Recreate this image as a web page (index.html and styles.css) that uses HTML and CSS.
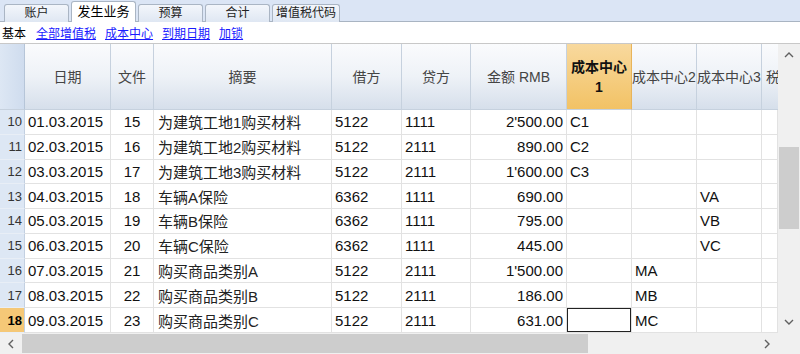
FILE: index.html
```html
<!DOCTYPE html>
<html lang="zh">
<head>
    <meta charset="UTF-8">
    <title>发生业务</title>
    <link rel="stylesheet" href="styles.css">
</head>
<body>
    <div class="app">
        <div class="tabs">
            <div class="tab">账户</div>
            <div class="tab active">发生业务</div>
            <div class="tab">预算</div>
            <div class="tab">合计</div>
            <div class="tab">增值税代码</div>
        </div>
        <div class="views">
            <span class="view-current">基本</span>
            <a href="#">全部增值税</a>
            <a href="#">成本中心</a>
            <a href="#">到期日期</a>
            <a href="#">加锁</a>
        </div>
        <div class="body">
            <div class="sheet">
                <div class="hd corner"></div>
                <div class="hd">日期</div>
                <div class="hd">文件</div>
                <div class="hd">摘要</div>
                <div class="hd">借方</div>
                <div class="hd">贷方</div>
                <div class="hd">金额 RMB</div>
                <div class="hd hd-active">成本中心<br>1</div>
                <div class="hd">成本中心2</div>
                <div class="hd">成本中心3</div>
                <div class="hd hd-clip">税</div>

                <div class="c num">10</div><div class="c">01.03.2015</div><div class="c doc">15</div><div class="c desc">为建筑工地1购买材料</div><div class="c">5122</div><div class="c">1111</div><div class="c amt">2'500.00</div><div class="c">C1</div><div class="c"></div><div class="c"></div><div class="c"></div>
                <div class="c num">11</div><div class="c">02.03.2015</div><div class="c doc">16</div><div class="c desc">为建筑工地2购买材料</div><div class="c">5122</div><div class="c">2111</div><div class="c amt">890.00</div><div class="c">C2</div><div class="c"></div><div class="c"></div><div class="c"></div>
                <div class="c num">12</div><div class="c">03.03.2015</div><div class="c doc">17</div><div class="c desc">为建筑工地3购买材料</div><div class="c">5122</div><div class="c">2111</div><div class="c amt">1'600.00</div><div class="c">C3</div><div class="c"></div><div class="c"></div><div class="c"></div>
                <div class="c num">13</div><div class="c">04.03.2015</div><div class="c doc">18</div><div class="c desc">车辆A保险</div><div class="c">6362</div><div class="c">1111</div><div class="c amt">690.00</div><div class="c"></div><div class="c"></div><div class="c">VA</div><div class="c"></div>
                <div class="c num">14</div><div class="c">05.03.2015</div><div class="c doc">19</div><div class="c desc">车辆B保险</div><div class="c">6362</div><div class="c">1111</div><div class="c amt">795.00</div><div class="c"></div><div class="c"></div><div class="c">VB</div><div class="c"></div>
                <div class="c num">15</div><div class="c">06.03.2015</div><div class="c doc">20</div><div class="c desc">车辆C保险</div><div class="c">6362</div><div class="c">1111</div><div class="c amt">445.00</div><div class="c"></div><div class="c"></div><div class="c">VC</div><div class="c"></div>
                <div class="c num">16</div><div class="c">07.03.2015</div><div class="c doc">21</div><div class="c desc">购买商品类别A</div><div class="c">5122</div><div class="c">2111</div><div class="c amt">1'500.00</div><div class="c"></div><div class="c">MA</div><div class="c"></div><div class="c"></div>
                <div class="c num">17</div><div class="c">08.03.2015</div><div class="c doc">22</div><div class="c desc">购买商品类别B</div><div class="c">5122</div><div class="c">2111</div><div class="c amt">186.00</div><div class="c"></div><div class="c">MB</div><div class="c"></div><div class="c"></div>
                <div class="c num num-active">18</div><div class="c">09.03.2015</div><div class="c doc">23</div><div class="c desc">购买商品类别C</div><div class="c">5122</div><div class="c">2111</div><div class="c amt">631.00</div><div class="c selected"></div><div class="c">MC</div><div class="c"></div><div class="c"></div>
            </div>
            <div class="vscroll">
                <div class="arrow">
                    <svg width="10" height="6" viewBox="0 0 10 6"><polyline points="1,5 5,1 9,5" fill="none" stroke="#606060" stroke-width="1.4"/></svg>
                </div>
                <div class="vtrack"><div class="vthumb"></div></div>
                <div class="arrow">
                    <svg width="10" height="6" viewBox="0 0 10 6"><polyline points="1,1 5,5 9,1" fill="none" stroke="#606060" stroke-width="1.4"/></svg>
                </div>
            </div>
        </div>
        <div class="hbar">
            <div class="hscroll">
                <div class="arrow harrow">
                    <svg width="6" height="10" viewBox="0 0 6 10"><polyline points="5,1 1,5 5,9" fill="none" stroke="#606060" stroke-width="1.4"/></svg>
                </div>
                <div class="hthumb"></div>
                <div class="htrack"></div>
                <div class="arrow harrow">
                    <svg width="6" height="10" viewBox="0 0 6 10"><polyline points="1,1 5,5 1,9" fill="none" stroke="#606060" stroke-width="1.4"/></svg>
                </div>
            </div>
            <div class="sizebox"></div>
        </div>
    </div>
</body>
</html>
```

FILE: styles.css
```css
body {
    margin: 0;
    background-color: #fff;
    font-family: "Liberation Sans", "Noto Sans CJK SC", sans-serif;
}

.app {
    width: 800px;
    height: 354px;
    display: flex;
    flex-direction: column;
    overflow: hidden;
}

/* tab strip */
.tabs {
    height: 22px;
    box-sizing: border-box;
    padding: 1px 0 0 4px;
    display: flex;
    align-items: flex-end;
    gap: 2px;
    background-color: #dbe5f5;
    border-bottom: 1px solid #a9b4c2;
}

.tab {
    width: 65px;
    height: 18px;
    box-sizing: border-box;
    margin-bottom: -1px;
    border: 1px solid #aab5c4;
    border-bottom: none;
    border-radius: 3px 3px 0 0;
    background: linear-gradient(#f3f6fb, #dfe7f3);
    font-size: 12px;
    line-height: 17px;
    text-align: center;
    color: #222;
}

.tab:last-child {
    width: 68px;
}

.tab.active {
    height: 21px;
    background: #fff;
    font-size: 13px;
    line-height: 20px;
    color: #000;
}

/* view links */
.views {
    height: 22px;
    box-sizing: border-box;
    padding: 0 0 0 2px;
    display: flex;
    align-items: center;
    gap: 9px;
    font-size: 12px;
    border-bottom: 1px solid #c8c8c8;
}

.view-current {
    color: #000;
    margin-right: 1px;
}

.views a {
    color: #1a1aff;
    text-decoration: underline;
}

/* spreadsheet */
.body {
    display: flex;
    height: 289px;
}

.sheet {
    width: 778px;
    display: grid;
    grid-template-columns: 25px 86px 43px 178px 70px 69px 96px 65px 65px 65px 16px;
    grid-template-rows: 66px repeat(9, 24.78px);
    overflow: hidden;
}

.hd {
    box-sizing: border-box;
    border-right: 1px solid #c6d1de;
    border-bottom: 1px solid #c6d1de;
    background: linear-gradient(#fafbfd 0%, #eef2f7 50%, #d6dfeb 100%);
    color: #444;
    font-size: 14px;
    line-height: 20px;
    display: flex;
    align-items: center;
    justify-content: center;
    text-align: center;
    white-space: nowrap;
    overflow: hidden;
}

.hd.corner {
    background: linear-gradient(90deg, #dde7f4, #cfdcee);
    border-right-color: #b6c5d8;
}

.hd.hd-active {
    background: linear-gradient(#f8d99e, #f2c265);
    border-right-color: #e8b45a;
    color: #111;
    font-weight: bold;
}

.hd.hd-clip {
    justify-content: flex-start;
    padding-left: 4px;
    border-right: none;
}

.c {
    box-sizing: border-box;
    border-right: 1px solid #e2e2e2;
    border-bottom: 1px solid #e2e2e2;
    padding: 0 3px;
    font-size: 15px;
    color: #111;
    display: flex;
    align-items: center;
    white-space: nowrap;
    overflow: hidden;
}

.c.num {
    background-color: #dde7f4;
    border-right-color: #c3d0e1;
    border-bottom-color: #e8eef6;
    justify-content: flex-end;
    padding: 0 2px 0 0;
    font-size: 13px;
    color: #333;
}

.c.num-active {
    background-color: #f5c877;
    font-weight: bold;
    color: #000;
}

.c.doc {
    justify-content: center;
}

.c.desc {
    padding-left: 4px;
    color: #222;
}

.c.amt {
    justify-content: flex-end;
    padding-right: 3px;
}

.c.selected {
    box-shadow: inset 0 0 0 1px #222;
}

/* scrollbars */
.vscroll {
    width: 22px;
    display: flex;
    flex-direction: column;
    background-color: #f0f0f0;
}

.arrow {
    height: 22px;
    display: flex;
    align-items: center;
    justify-content: center;
}

.vtrack {
    flex: 1;
    padding-top: 81px;
}

.vthumb {
    margin: 0 1px;
    height: 82px;
    background-color: #cdcdcd;
}

.hbar {
    flex: 1;
    display: flex;
    background-color: #f0f0f0;
}

.hscroll {
    width: 778px;
    display: flex;
    align-items: stretch;
}

.harrow {
    width: 22px;
    height: auto;
}

.hthumb {
    width: 566px;
    margin: 1px 0;
    background-color: #cdcdcd;
}

.htrack {
    flex: 1;
}

.sizebox {
    flex: 1;
}
```
